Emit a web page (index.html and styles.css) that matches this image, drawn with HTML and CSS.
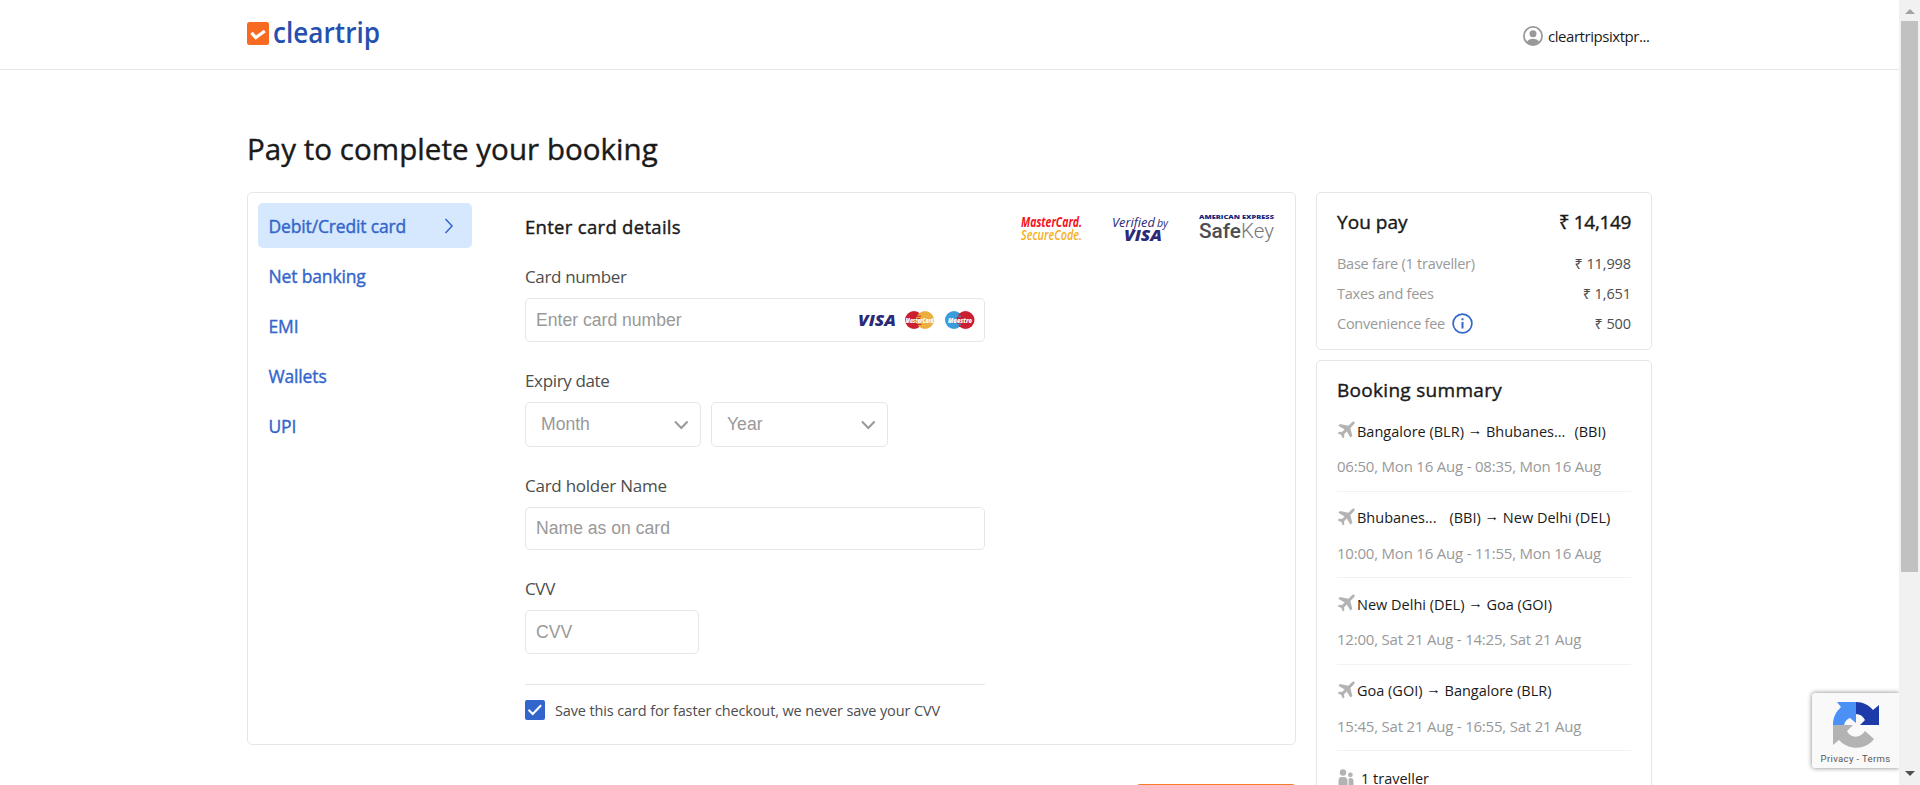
FILE: index.html
```html
<!DOCTYPE html>
<html lang="en">
<head>
<meta charset="utf-8">
<title>Cleartrip payment</title>
<link rel="stylesheet" href="styles.css">
</head>
<body>
<div class="window">
  <div class="page">
    <header class="header">
      <div class="wrap header-row">
        <svg class="logo" width="136" height="40" viewBox="0 0 136 40">
          <rect x="0" y="9" width="22" height="23" rx="2.5" fill="#f66a22"/>
          <path d="M4.500 19.800l4.300 4.700 9-6.500" fill="none" stroke="#fff" stroke-width="3.200"/>
          <text class="logo-text" x="26" y="29.500" textLength="107" lengthAdjust="spacingAndGlyphs">cleartrip</text>
        </svg>
        <div class="user">
          <svg width="20" height="20" viewBox="0 0 20 20"><circle cx="10" cy="10" r="9.1" fill="#fff" stroke="#999" stroke-width="1.8"/><circle cx="10" cy="7.8" r="3.5" fill="#999"/><path d="M3.6 16.2C5 13.6 7.400 12.800 10 12.800s5 .8 6.400 3.400A9 9 0 0 1 10 19a9 9 0 0 1-6.400-2.800z" fill="#999"/></svg>
          <span class="user-name">cleartripsixtpr...</span>
        </div>
      </div>
    </header>
    <main class="wrap">
      <h1 class="title">Pay to complete your booking</h1>
      <div class="columns">
        <div class="primary">
          <section class="panel pay">
            <nav class="tabs">
              <a class="tab tab-on"><span class="tab-card">Debit/Credit card</span><svg width="10" height="16" viewBox="0 0 10 16"><path d="M1.500 1l6.500 7-6.500 7" fill="none" stroke="#3366cc" stroke-width="1.500"/></svg></a>
              <a class="tab"><span>Net banking</span></a>
              <a class="tab"><span>EMI</span></a>
              <a class="tab"><span>Wallets</span></a>
              <a class="tab"><span>UPI</span></a>
            </nav>
            <div class="form">
              <div class="form-head">
                <h2 class="form-title">Enter card details</h2>
                <svg class="trust" width="254" height="32" viewBox="0 0 254 32">
                  <g class="mark-bold"><text x="0" y="12" fill="#f5121d" textLength="61" lengthAdjust="spacingAndGlyphs">MasterCard.</text><text class="semi" x="0" y="24.500" fill="#f4ae19" textLength="61" lengthAdjust="spacingAndGlyphs">SecureCode.</text></g>
                  <text class="mark-thin" x="91" y="12" font-size="13.500" textLength="43" lengthAdjust="spacingAndGlyphs">Verified</text>
                  <text class="mark-thin" x="136" y="12" font-size="11.500" textLength="11" lengthAdjust="spacingAndGlyphs">by</text>
                  <text class="visa" x="103" y="26" textLength="38" lengthAdjust="spacingAndGlyphs">VISA</text>
                  <text class="amex" x="178" y="4.300" textLength="75" lengthAdjust="spacingAndGlyphs">AMERICAN EXPRESS</text>
                  <text class="safe" x="178" y="22.500" textLength="42" lengthAdjust="spacingAndGlyphs">Safe</text><text class="key" x="220" y="22.500" textLength="33" lengthAdjust="spacingAndGlyphs">Key</text>
                </svg>
              </div>
              <label class="label">Card number</label>
              <div class="input input-card"><span>Enter card number</span>
                <svg width="118" height="20" viewBox="0 0 118 20">
                  <text class="visa" x="1" y="16" textLength="38" lengthAdjust="spacingAndGlyphs">VISA</text>
                  <circle cx="57" cy="10" r="9" fill="#cb2030"/><circle cx="68" cy="10" r="9" fill="#ebaf3d"/>
                  <path d="M59 6.200h5M59 8.500h4M59 12h4M59.500 14.400h5" stroke="#cb2030" stroke-width="1"/>
                  <text class="tiny" x="48.500" y="12.600" textLength="28" lengthAdjust="spacingAndGlyphs">MasterCard</text>
                  <circle cx="97" cy="10" r="9" fill="#3a9cda"/><circle cx="108.500" cy="10" r="9" fill="#cb2030"/>
                  <path d="M99 6.200h5M99 14.400h5" stroke="#3a9cda" stroke-width="1"/>
                  <text class="tiny" x="91" y="12.600" textLength="24" lengthAdjust="spacingAndGlyphs">Maestro</text>
                </svg>
              </div>
              <label class="label">Expiry date</label>
              <div class="selects">
                <div class="input select"><span>Month</span><svg width="15" height="10" viewBox="0 0 15 10"><path d="M1 1.500l6.300 6.500 6.300-6.500" fill="none" stroke="#999" stroke-width="2"/></svg></div>
                <div class="input select select-year"><span>Year</span><svg width="15" height="10" viewBox="0 0 15 10"><path d="M1 1.500l6.300 6.500 6.300-6.500" fill="none" stroke="#999" stroke-width="2"/></svg></div>
              </div>
              <label class="label label-name">Card holder Name</label>
              <div class="input input-name"><span>Name as on card</span></div>
              <label class="label">CVV</label>
              <div class="input input-cvv"><span>CVV</span></div>
              <div class="save">
                <svg width="20" height="20" viewBox="0 0 20 20"><rect width="20" height="20" rx="2" fill="#3366cc"/><path d="M3.500 9.800l4.200 4.200 8.400-8.800" fill="none" stroke="#fff" stroke-width="2"/></svg>
                <span class="save-text">Save this card for faster checkout, we never save your CVV</span>
              </div>
            </div>
          </section>
          <div class="pay-button"></div>
        </div>
        <aside class="side">
          <section class="panel fare">
            <div class="fare-row fare-total"><span>You pay</span><span class="h-sum">₹ 14,149</span></div>
            <div class="fare-row"><span class="muted">Base fare (1 traveller)</span><span class="amount">₹ 11,998</span></div>
            <div class="fare-row"><span class="muted">Taxes and fees</span><span class="amount">₹ 1,651</span></div>
            <div class="fare-row"><span class="muted fee">Convenience fee <svg width="21" height="21" viewBox="0 0 21 21"><circle cx="10.500" cy="10.500" r="9.400" fill="none" stroke="#3366cc" stroke-width="1.700"/><path d="M10.500 9v6.500M10.500 5.300v2" stroke="#3366cc" stroke-width="2"/></svg></span><span class="amount">₹ 500</span></div>
          </section>
          <section class="panel summary">
            <h2 class="h-book">Booking summary</h2>
            <div class="leg"><div class="route"><svg class="plane" viewBox="0 0 18 18"><use href="#plane"/></svg><span>Bangalore (BLR) <i class="arrow">→</i> Bhubanes...</span><span class="code-a">(BBI)</span></div><div class="time">06:50, Mon 16 Aug - 08:35, Mon 16 Aug</div></div>
            <div class="leg"><div class="route"><svg class="plane" viewBox="0 0 18 18"><use href="#plane"/></svg><span>Bhubanes...</span><span class="code-b">(BBI) <i class="arrow">→</i> New Delhi (DEL)</span></div><div class="time">10:00, Mon 16 Aug - 11:55, Mon 16 Aug</div></div>
            <div class="leg"><div class="route"><svg class="plane" viewBox="0 0 18 18"><use href="#plane"/></svg><span>New Delhi (DEL) <i class="arrow">→</i> Goa (GOI)</span></div><div class="time">12:00, Sat 21 Aug - 14:25, Sat 21 Aug</div></div>
            <div class="leg"><div class="route"><svg class="plane" viewBox="0 0 18 18"><use href="#plane"/></svg><span>Goa (GOI) <i class="arrow">→</i> Bangalore (BLR)</span></div><div class="time">15:45, Sat 21 Aug - 16:55, Sat 21 Aug</div></div>
            <div class="travellers"><svg width="18" height="18" viewBox="0 0 18 18" fill="#b3b3b3"><circle cx="6" cy="3.500" r="3.200"/><circle cx="13.400" cy="5.800" r="2.400"/><path d="M1.500 18v-7a3.500 3.500 0 0 1 3.500-3h2.500a3.500 3.500 0 0 1 3 3v7zM11.600 18v-7.500c0-1 .6-1.500 1.800-1.500 2 0 3.100 1 3.100 3v6z"/></svg><span>1 traveller</span></div>
          </section>
        </aside>
      </div>
    </main>
    <div class="captcha">
      <svg width="48" height="48" viewBox="0 0 48 48">
        <path d="M1 24C1 16 4 11 9 6L5 1h19v21l-6-5c-3 1-5 3-6 7z" fill="#4a90f5"/>
        <path d="M24 1c7 0 13 3 17 8l6-5v20H28l5-5c-2-4-5-6-9-6z" fill="#1c3aa9"/>
        <path d="M1 24h20l-6 6c3 7 13 8 18 0l9 8C34 49 17 50 7 39l-6 5z" fill="#b3b3b3"/>
      </svg>
      <span>Privacy - Terms</span>
    </div>
  </div>
  <div class="scrollbar"><i class="up"></i><div class="thumb"></div><i class="down"></i></div>
</div>
<svg width="0" height="0" class="defs"><defs><path id="plane" fill="#b3b3b3" d="M17.300.7c.8.8.3 2-.6 2.900l-3.300 3.300 1.900 8.200-1.900 1.500-3.700-6.100-2.700 2.900.4 2.800-1.600 1.400-1.500-3.600L.7 12.300l1.400-1.600 2.800.4L7.600 8.400 1.300 4.700 3 2.900l8.400 1.900 3.300-3.200c.9-.9 1.900-1.600 2.600-.9z"/></defs></svg>
</body>
</html>
```

FILE: styles.css
```css
* { box-sizing: border-box; }
body { margin: 0; height: 785px; overflow: hidden; background: #fff; color: #1a1a1a; font-family: "Open Sans", "Noto Sans", sans-serif; }
h1, h2 { margin: 0; font-weight: 400; }
svg { display: block; flex: none; }
span, h1, h2, label, .time { white-space: nowrap; }
.title, .tab, .form-title, .fare-total, .h-book { -webkit-text-stroke: 0.4px currentColor; }
.defs { display: none; }
.window { display: flex; height: 785px; overflow: hidden; }
.page { position: relative; width: 1899px; height: 785px; overflow: hidden; }
.wrap { width: 1405px; margin-left: 247px; }
.header { height: 70px; border-bottom: 1px solid #e6e6e6; }
.header-row { display: flex; justify-content: space-between; }
.logo { margin-top: 13px; }
.logo-text { font: 600 28px "Open Sans", sans-serif; fill: #2650b0; }
.user { display: flex; align-items: center; gap: 5px; height: 72px; width: 129px; font-size: 15px; }
.user-name { letter-spacing: -0.45px; }
.title { margin-top: 57px; height: 65px; line-height: 44px; font-size: 29.500px; letter-spacing: 0.05px; }
.columns { display: flex; justify-content: space-between; align-items: flex-start; }
.panel { border: 1px solid #e6e6e6; border-radius: 5px; }
.primary { width: 1049px; }
.pay { display: flex; height: 553px; padding: 10px; }
.tabs { width: 214px; margin-right: 53px; display: flex; flex-direction: column; gap: 5px; }
.tab { display: flex; align-items: center; justify-content: space-between; height: 45px; padding: 0 18px 0 10.500px; border-radius: 5px; color: #3366cc; font-size: 17.500px; letter-spacing: -0.15px; }
.tab-on { background: #d6e8fd; }
.form { width: 750px; }
.form-head { display: flex; justify-content: space-between; height: 59px; }
.form-title { font-size: 18.500px; line-height: 47px; letter-spacing: 0.3px; }
.trust { margin-top: 12px; overflow: visible; }
.label { display: block; height: 36px; line-height: 30px; font-size: 17px; color: #4d4d4d; letter-spacing: -0.35px; }
.label-name { letter-spacing: -0.25px; }
.input { display: flex; align-items: center; justify-content: space-between; width: 460px; height: 44px; padding: 0 10px; border: 1px solid #e6e6e6; border-radius: 5px; font: 17.600px "Liberation Sans", Arial, sans-serif; color: #999; }
.input-card { margin-bottom: 24px; padding-right: 9px; }
.selects { display: flex; gap: 10px; margin-bottom: 24px; }
.select { width: 176px; height: 45px; padding: 0 11px 0 15px; }
.select-year { width: 177px; }
.input-name { height: 43px; margin-bottom: 24px; }
.input-cvv { width: 174px; }
.save { display: flex; align-items: flex-start; gap: 10px; width: 460px; margin-top: 30px; padding-top: 15px; border-top: 1px solid #e6e6e6; }
.save-text { font-size: 14.500px; line-height: 21px; color: #4d4d4d; letter-spacing: -0.13px; }
.pay-button { width: 158px; height: 50px; margin: 39px 1px 0 auto; border-radius: 3px; background: #f77d2a; }
.side { width: 336px; display: flex; flex-direction: column; gap: 10px; }
.fare { height: 158px; padding: 13px 20px; }
.fare-row { display: flex; justify-content: space-between; align-items: center; height: 30px; font-size: 14.500px; letter-spacing: -0.1px; }
.fare-total { height: 32px; margin-bottom: 10px; font-size: 19px; letter-spacing: 0.05px; }
.h-sum { letter-spacing: -0.35px; }
.muted { color: #999; letter-spacing: -0.25px; }
.fee { display: flex; align-items: center; gap: 7px; }
.amount { color: #4d4d4d; }
.summary { height: 500px; padding: 14px 20px; }
.h-book { font-size: 19px; line-height: 30px; letter-spacing: 0.3px; }
.leg { height: 86.600px; border-bottom: 1px solid #f2f2f2; padding-top: 14px; }
.route { display: flex; align-items: center; height: 24px; font-size: 14.500px; letter-spacing: 0; }
.plane { width: 18px; height: 18px; margin-right: 2px; position: relative; top: -1px; }
.arrow { font-style: normal; position: relative; top: -2px; }
.code-a { margin-left: 9px; }
.code-b { margin-left: 13px; }
.time { margin-top: 11px; font-size: 15px; line-height: 24px; color: #999; letter-spacing: -0.21px; }
.travellers { display: flex; align-items: center; gap: 6px; height: 54px; font-size: 14.500px; }
.captcha { position: absolute; right: 0; top: 693px; width: 87px; height: 75px; padding-top: 8px; display: flex; flex-direction: column; align-items: center; gap: 4px; background: #f9f9f9; border-radius: 3px 0 0 3px; box-shadow: 0 0 5px #808080; font: 9.500px Roboto, sans-serif; letter-spacing: 0.35px; color: #555; }
.scrollbar { width: 21px; height: 785px; background: #f1f1f1; display: flex; flex-direction: column; align-items: center; }
.up { border: 5px solid transparent; border-top: 0; border-bottom: 5px solid #a3a3a3; margin-top: 9px; }
.thumb { width: 17px; height: 551px; margin: 7px 0 0; background: #c1c1c1; }
.down { border: 5px solid transparent; border-bottom: 0; border-top: 5px solid #505050; margin-top: auto; margin-bottom: 9px; }
.visa { font: italic 800 16.500px "Open Sans", sans-serif; fill: #2b2a77; }
.mark-bold { font: italic 700 13.500px "Open Sans", sans-serif; }
.semi { font-weight: 600; }
.mark-thin { font-family: "Open Sans", sans-serif; font-style: italic; fill: #2b2a77; }
.amex { font: 800 5.500px "Open Sans", sans-serif; fill: #16247a; }
.safe { font: 500 20px Roboto, sans-serif; fill: #4d4d4f; }
.key { font: 300 20px Roboto, sans-serif; fill: #77787b; }
.tiny { font: italic 800 6px "Open Sans", sans-serif; fill: #fff; }
```
